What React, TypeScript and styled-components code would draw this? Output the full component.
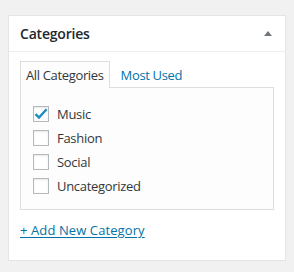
import React from "react";
import styled, { createGlobalStyle } from "styled-components";

const Global = createGlobalStyle`
  body {
    margin: 0;
    background: #f1f1f1;
    font-family: "Open Sans", "Noto Sans", sans-serif;
    color: #23282d;
  }
`;

const Page = styled.div`
  padding: 15px 8px 0;
`;

const Box = styled.div`
  background: #fff;
  border: 1px solid #e5e5e5;
  box-shadow: 0 1px 1px rgba(0, 0, 0, 0.04);
  height: 244px;
  box-sizing: content-box;
`;

const Header = styled.div`
  display: flex;
  align-items: center;
  justify-content: space-between;
  height: 35px;
  padding: 0 13px 0 11px;
  border-bottom: 1px solid #eee;
`;

const Title = styled.h2`
  margin: 0;
  font-size: 14px;
  font-weight: 600;
  letter-spacing: -0.2px;
  color: #23282d;
`;

const Toggle = styled.span`
  width: 0;
  height: 0;
  border-left: 4px solid transparent;
  border-right: 4px solid transparent;
  border-bottom: 5px solid #72777c;
`;

const Inside = styled.div`
  padding: 8px 11px 0;
`;

const Tabs = styled.div`
  display: flex;
  align-items: flex-end;
  height: 27px;
`;

const Tab = styled.div<{ $active?: boolean }>`
  height: 27px;
  box-sizing: border-box;
  display: flex;
  align-items: center;
  padding: 0 5px;
  margin-left: ${(p) => (p.$active ? "0" : "5px")};
  font-size: 13px;
  letter-spacing: -0.35px;
  color: ${(p) => (p.$active ? "#32373c" : "#0073aa")};
  background: ${(p) => (p.$active ? "#fdfdfd" : "transparent")};
  border: 1px solid ${(p) => (p.$active ? "#ddd" : "transparent")};
  border-bottom: none;
  position: relative;
  margin-bottom: -1px;
  z-index: 1;
`;

const Panel = styled.div`
  background: #fdfdfd;
  border: 1px solid #ddd;
  height: 123px;
  box-sizing: border-box;
  padding: 18px 12px 0;
  display: flex;
  flex-direction: column;
  gap: 8px;
`;

const Row = styled.label`
  display: flex;
  align-items: center;
  gap: 8px;
  height: 16px;
  font-size: 13px;
  letter-spacing: -0.3px;
  color: #32373c;
`;

const Check = styled.span`
  width: 16px;
  height: 16px;
  box-sizing: border-box;
  border: 1px solid #b4b9be;
  background: #fff;
  box-shadow: inset 0 1px 2px rgba(0, 0, 0, 0.1);
  display: flex;
  align-items: center;
  justify-content: center;
  flex: none;
`;

const AddLink = styled.a`
  display: inline-block;
  margin-top: 11px;
  font-size: 13px;
  letter-spacing: 0.1px;
  color: #0073aa;
  text-decoration: underline;
  text-underline-offset: 2px;
`;

const items = [
  { name: "Music", checked: true },
  { name: "Fashion", checked: false },
  { name: "Social", checked: false },
  { name: "Uncategorized", checked: false },
];

export default function App() {
  return (
    <>
      <Global />
      <Page>
        <Box>
          <Header>
            <Title>Categories</Title>
            <Toggle />
          </Header>
          <Inside>
            <Tabs>
              <Tab $active>All Categories</Tab>
              <Tab>Most Used</Tab>
            </Tabs>
            <Panel>
              {items.map((it) => (
                <Row key={it.name}>
                  <Check>
                    {it.checked && (
                      <svg width="14" height="14" viewBox="0 0 14 14">
                        <path d="M1.5 7.2 L5 10.6 L12.6 2.2" fill="none" stroke="#1e8cbe" strokeWidth="2.4" />
                      </svg>
                    )}
                  </Check>
                  {it.name}
                </Row>
              ))}
            </Panel>
            <AddLink href="#">+ Add New Category</AddLink>
          </Inside>
        </Box>
      </Page>
    </>
  );
}
